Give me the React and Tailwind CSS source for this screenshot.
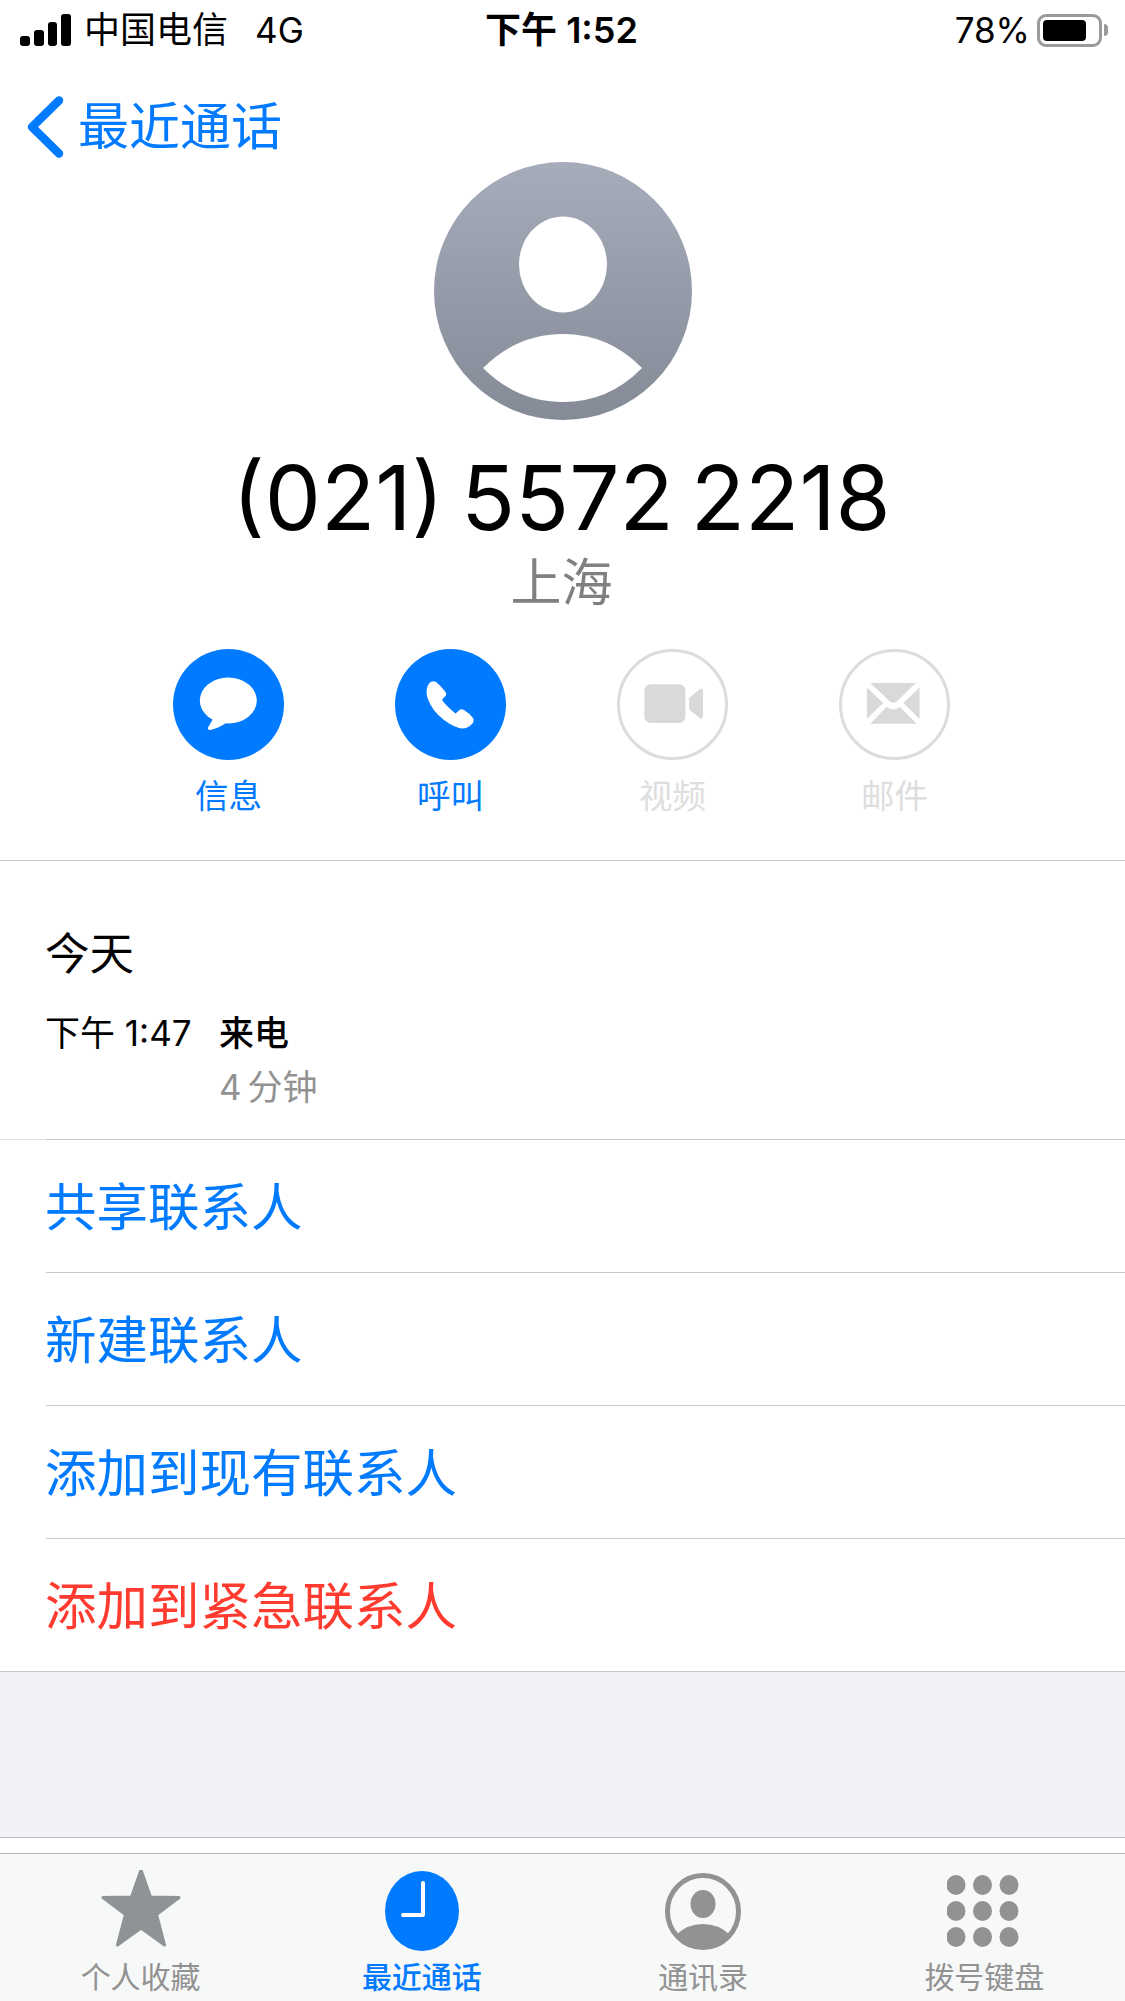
const font = { sans: "font-['Inter','Noto_Sans_CJK_SC',sans-serif]" };

const Bubble = () => (
  <svg viewBox="0 0 111 111" className="w-full h-full">
    <ellipse cx="55.3" cy="51.5" rx="28.5" ry="23" fill="#fff" />
    <path d="M40 70 L35 78.5 Q34 81 37.5 81 Q46 79 53 74 Z" fill="#fff" />
  </svg>
);

const Phone = () => (
  <svg viewBox="0 0 111 111" className="w-full h-full">
    <path
      d="M34 34.5 Q37 31 41 33 Q44 35 50.5 43 Q52 45.5 50 47.5 L47 50.5 Q49 55 60.5 64.5 L64 61.5 Q66 59.5 69 61 Q74 64 78 69 Q79.5 71.5 77.5 74.5 Q73 79.5 67 79.5 Q60 79 49 71 Q37 62 32.5 49 Q30 40 34 34.5 Z"
      fill="#fff"
    />
  </svg>
);

const Video = () => (
  <svg viewBox="0 0 111 111" className="w-full h-full" fill="#d8d9db">
    <rect x="25.7" y="34" width="43.5" height="41" rx="7" />
    <path d="M73 48.5 L84.5 39 Q87.7 37.5 87.7 41 L87.7 68 Q87.7 71.5 84.5 70 L73 60.5 Z" />
  </svg>
);

const Mail = () => (
  <svg viewBox="0 0 111 111" className="w-full h-full" fill="#d8d9db">
    <path d="M30 32.7 H78 L58 52 Q54.3 55.5 50.5 52 Z" />
    <path d="M26.3 37.5 L43.5 54 L26.3 70.7 Z" />
    <path d="M82 37.5 L64.8 54 L82 70.7 Z" />
    <path d="M30 75.8 L47.3 58 Q54.3 63.5 61 58 L79 75.8 Z" />
  </svg>
);

const Star = () => (
  <svg viewBox="0 3 82 82" className="w-[82px] h-[82px]">
    <path
      d="M41 3 L50.5 30 L79 30.5 L56.5 47.5 L64.5 78 L41 61 L17.5 78 L25.5 47.5 L3 30.5 L31.5 30 Z"
      fill="#8e9396"
      stroke="#8e9396"
      strokeWidth="3"
      strokeLinejoin="round"
    />
  </svg>
);

const Clock = () => (
  <svg viewBox="0 0 74 80" className="w-[74px] h-[80px]">
    <ellipse cx="37" cy="40" rx="37" ry="40" fill="#007aff" />
    <path d="M38 12 V44 H18" fill="none" stroke="#fff" strokeWidth="4" strokeLinecap="round" strokeLinejoin="round" />
  </svg>
);

const Person = () => (
  <svg viewBox="0 0 76 77" className="w-[76px] h-[77px]">
    <ellipse cx="38" cy="38.5" rx="35.5" ry="36" fill="none" stroke="#929292" strokeWidth="5" />
    <ellipse cx="38" cy="31" rx="12.5" ry="14" fill="#929292" />
    <path d="M11 62 Q22 51 38 51 Q54 51 65 62 Q53 75 38 75 Q23 75 11 62 Z" fill="#929292" />
  </svg>
);

const Keypad = () => (
  <svg viewBox="1 0 74 72" className="w-[74px] h-[72px]" fill="#929292">
    {[10, 36, 62].map((cy) =>
      [10, 36.5, 63].map((cx) => <ellipse key={`${cx}-${cy}`} cx={cx} cy={cy} rx="9.5" ry="10" />)
    )}
  </svg>
);

const actions = [
  { label: "信息", icon: <Bubble />, on: true },
  { label: "呼叫", icon: <Phone />, on: true },
  { label: "视频", icon: <Video />, on: false },
  { label: "邮件", icon: <Mail />, on: false },
];

const tabs = [
  { label: "个人收藏", icon: <Star /> },
  { label: "最近通话", icon: <Clock />, active: true },
  { label: "通讯录", icon: <Person /> },
  { label: "拨号键盘", icon: <Keypad /> },
];

const rows = [
  { label: "共享联系人" },
  { label: "新建联系人" },
  { label: "添加到现有联系人" },
  { label: "添加到紧急联系人", red: true },
];

const App = () => {
  return (
    <div className={`${font.sans} w-[1125px] h-[2001px] overflow-hidden bg-white flex flex-col text-black`}>
      {/* status bar */}
      <div className="h-[60px] shrink-0 grid grid-cols-3 items-center pl-[20px] pr-[17px]">
        <div className="flex items-center">
          <div className="flex items-end gap-[4px] h-[32px] w-[51px]">
            <div className="w-[10px] h-[10px] bg-black rounded-[3px]" />
            <div className="w-[10px] h-[16px] bg-black rounded-[3px]" />
            <div className="w-[10px] h-[24px] bg-black rounded-[3px]" />
            <div className="w-[10px] h-[32px] bg-black rounded-[3px]" />
          </div>
          <span className="ml-[13px] text-[36px] leading-[44px]">中国电信</span>
          <span className="ml-[27px] text-[35px] leading-[44px]">4G</span>
        </div>
        <div className="text-center text-[36px] leading-[44px] font-semibold whitespace-nowrap pr-[5px]">下午 1:52</div>
        <div className="flex items-center justify-end">
          <span className="text-[35px] leading-[44px]">78%</span>
          <div className="ml-[7px] w-[65px] h-[33px] border-[3px] border-[#9a9a9a] rounded-[9px] p-[3px]">
            <div className="w-[43px] h-full bg-black rounded-[4px]" />
          </div>
          <div className="ml-[2px] w-[4px] h-[12px] bg-[#9a9a9a] rounded-r-full" />
        </div>
      </div>

      {/* nav */}
      <div className="h-[102px] shrink-0 flex items-center pt-[32px] pl-[26px] text-[#007aff]">
        <svg viewBox="0 0 38 62" className="w-[38px] h-[62px]">
          <path d="M33 4.5 L6 31 L33 57.5" fill="none" stroke="#007aff" strokeWidth="8.5" strokeLinecap="round" strokeLinejoin="round" />
        </svg>
        <span className="ml-[14px] text-[51px] leading-[60px]">最近通话</span>
      </div>

      {/* avatar */}
      <div className="w-[258px] h-[258px] shrink-0 ml-[434px] rounded-full bg-gradient-to-b from-[#a6acba] to-[#858a97] flex items-center justify-center">
        <svg viewBox="0 0 258 258" className="w-full h-full">
          <ellipse cx="129" cy="102.5" rx="44" ry="48" fill="#fff" />
          <path d="M49 206 Q83 172 129 172 Q175 172 208 206 Q175 240 129 240 Q83 240 49 206 Z" fill="#fff" />
        </svg>
      </div>

      {/* number */}
      <div className="mt-[33px] h-[90px] text-center text-[89px] leading-[90px] [word-spacing:-8px] whitespace-nowrap pr-[2px]">(021) 5572 2218</div>
      <div className="mt-[10px] h-[60px] text-center text-[51px] leading-[60px] text-[#808080] pr-[2px]">上海</div>

      {/* actions */}
      <div className="mt-[36px] ml-[117px] flex">
        {actions.map((a) => (
          <div key={a.label} className="w-[222px] flex flex-col items-center">
            <div
              className={`w-[111px] h-[111px] rounded-full ${
                a.on ? "bg-[#007aff]" : "border-[3px] border-[#dcdcdc]"
              }`}
            >
              {a.icon}
            </div>
            <div className={`mt-[16px] pl-[1px] text-[33.5px] leading-[40px] ${a.on ? "text-[#007aff]" : "text-[#dedede]"}`}>
              {a.label}
            </div>
          </div>
        ))}
      </div>
      <div className="mt-[44px] h-px shrink-0 bg-[#c8c7cc]" />

      {/* call log */}
      <div className="pl-[45px] pt-[65px] h-[278px] shrink-0">
        <div className="text-[44.5px] leading-[56px]">今天</div>
        <div className="mt-[29px] flex text-[35px] leading-[44px]">
          <span className="w-[174px]">下午 1:47</span>
          <div>
            <div className="font-medium">来电</div>
            <div className="mt-[10px] text-[#929292] [word-spacing:-4px]">4 分钟</div>
          </div>
        </div>
      </div>

      {/* rows */}
      <div className="shrink-0 bg-[#e4e4e6] h-px">
        <div className="ml-[46px] h-px bg-[#c8c7cc]" />
      </div>
      {rows.map((r, i) => (
        <div key={r.label} className="h-[133px] shrink-0 flex flex-col">
          <div
            className={`flex-1 pl-[45px] pt-[1px] flex items-center text-[51.5px] leading-[60px] ${
              r.red ? "text-[#ff3b30]" : "text-[#007aff]"
            }`}
          >
            {r.label}
          </div>
          <div className={`h-px bg-[#c8c7cc] ${i < rows.length - 1 ? "ml-[46px]" : ""}`} />
        </div>
      ))}

      <div className="flex-1 bg-[#f1f1f6]" />
      <div className="h-px shrink-0 bg-[#c0c0c4]" />
      <div className="h-[15px] shrink-0 bg-white" />

      {/* tab bar */}
      <div className="h-[148px] shrink-0 border-t border-[#b8b8ba] bg-[#f7f8f8] grid grid-cols-4">
        {tabs.map((t) => (
          <div key={t.label} className="flex flex-col items-center">
            <div className="h-[84px] mt-[15px] flex items-center justify-center">{t.icon}</div>
            <div className={`mt-[4px] text-[30px] leading-[40px] ${t.active ? "text-[#007aff] font-medium" : "text-[#929292]"}`}>
              {t.label}
            </div>
          </div>
        ))}
      </div>
    </div>
  );
};

export default App;
